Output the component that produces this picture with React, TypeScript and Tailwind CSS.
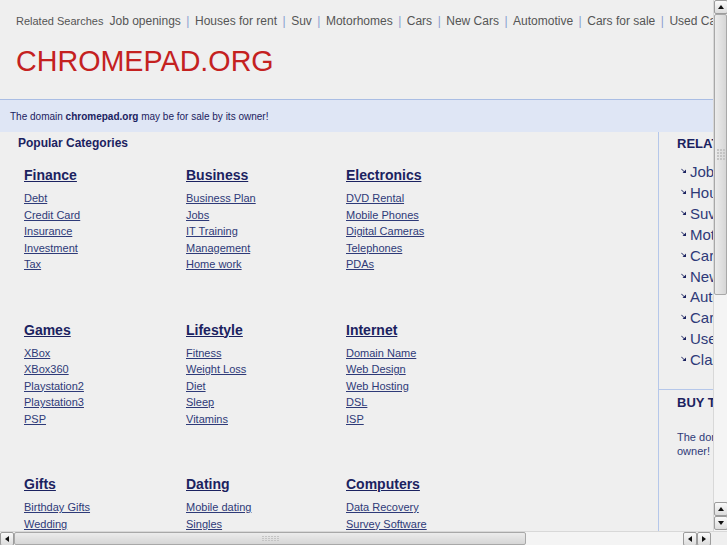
import React from 'react';

const related = [
  'Job openings',
  'Houses for rent',
  'Suv',
  'Motorhomes',
  'Cars',
  'New Cars',
  'Automotive',
  'Cars for sale',
  'Used Cars',
  'Classifieds',
];

const groups = [
  [
    { title: 'Finance', links: ['Debt', 'Credit Card', 'Insurance', 'Investment', 'Tax'] },
    { title: 'Business', links: ['Business Plan', 'Jobs', 'IT Training', 'Management', 'Home work'] },
    { title: 'Electronics', links: ['DVD Rental', 'Mobile Phones', 'Digital Cameras', 'Telephones', 'PDAs'] },
  ],
  [
    { title: 'Games', links: ['XBox', 'XBox360', 'Playstation2', 'Playstation3', 'PSP'] },
    { title: 'Lifestyle', links: ['Fitness', 'Weight Loss', 'Diet', 'Sleep', 'Vitamins'] },
    { title: 'Internet', links: ['Domain Name', 'Web Design', 'Web Hosting', 'DSL', 'ISP'] },
  ],
  [
    { title: 'Gifts', links: ['Birthday Gifts', 'Wedding', 'Flowers', 'Jewelry', 'Toys'] },
    { title: 'Dating', links: ['Mobile dating', 'Singles', 'Online Dating', 'Chat', 'Personals'] },
    { title: 'Computers', links: ['Data Recovery', 'Survey Software', 'Software', 'Laptops', 'Storage'] },
  ],
];

function Arrow({ dir }: { dir: 'up' | 'down' | 'left' | 'right' }) {
  const pts = {
    up: '1,6 4,2 7,6',
    down: '1,2 4,6 7,2',
    left: '6,1 2,4 6,7',
    right: '2,1 6,4 2,7',
  }[dir];
  return (
    <svg width="8" height="8" viewBox="0 0 8 8">
      <polygon points={pts} fill="#111" />
    </svg>
  );
}

function ScrollButton({ dir }: { dir: 'up' | 'down' | 'left' | 'right' }) {
  return (
    <div className="w-[14px] h-[14px] flex items-center justify-center rounded-[2px] border border-[#9c9c9c] bg-gradient-to-b from-[#fafafa] to-[#dcdcdc] shrink-0">
      <Arrow dir={dir} />
    </div>
  );
}

function SideArrow() {
  return (
    <svg width="5" height="5" viewBox="0 0 5 5" className="mt-[6px] shrink-0">
      <line x1="0.3" y1="0.8" x2="3.5" y2="4" stroke="#1b2260" strokeWidth="1" />
      <polygon points="5,1.5 5,5 1.5,5" fill="#1b2260" />
    </svg>
  );
}

export default function App() {
  return (
    <div
      className="w-[727px] h-[545px] flex flex-col overflow-hidden bg-[#efefef]"
      style={{ fontFamily: '"Liberation Sans", Arial, sans-serif' }}
    >
      <div className="flex flex-1 min-h-0">
        <div className="flex-1 overflow-hidden">
          <div className="w-[920px]">
            {/* header */}
            <div className="px-4 pt-[12px] h-[99px]">
              <div className="flex items-baseline whitespace-nowrap text-[12px] text-[#555] leading-[18px]">
                <span className="text-[11px] mr-[6px]">Related Searches</span>
                {related.map((r, i) => (
                  <span key={r} className="flex items-baseline">
                    {i > 0 && <span className="text-[#8a9fd0] mx-[5.5px]">|</span>}
                    <span>{r}</span>
                  </span>
                ))}
              </div>
              <div className="mt-[14px] text-[28.7px] leading-[34px] text-[#c4211f]">
                CHROMEPAD.ORG
              </div>
            </div>

            {/* for sale bar */}
            <div className="h-[33px] border-t border-[#a9bde4] bg-[#dfe6f5] pl-[10px] flex items-center text-[10px] text-[#1b2260]">
              <span>
                The domain <b>chromepad.org</b> may be for sale by its owner!
              </span>
            </div>

            <div className="flex">
              {/* categories */}
              <div className="w-[659px] h-[400px] border-r border-[#b5c7ea] pt-[4px]">
                <div className="pl-[18px] text-[12px] font-bold text-[#1b2260] leading-[15px]">
                  Popular Categories
                </div>
                <div className="pl-[24px] pt-[16px] flex flex-col gap-[49px]">
                  {groups.map((row, ri) => (
                    <div key={ri} className="grid grid-cols-[162px_160px_160px]">
                      {row.map((g) => (
                        <div key={g.title}>
                          <div className="text-[14px] font-bold text-[#1b2260] underline leading-[16px] mb-[7px]">
                            {g.title}
                          </div>
                          <ul className="text-[11px] text-[#2e3a78] leading-[16.5px]">
                            {g.links.map((l) => (
                              <li key={l}>
                                <span className="underline">{l}</span>
                              </li>
                            ))}
                          </ul>
                        </div>
                      ))}
                    </div>
                  ))}
                </div>
              </div>

              {/* sidebar */}
              <div className="w-[250px]">
                <div className="pl-[18px] pr-3 pt-[4px] h-[257px]">
                  <div className="text-[13px] font-bold text-[#1b2260] leading-[15px]">RELATED SEARCHES</div>
                  <ul className="mt-[11px] pl-[4px] text-[15px] text-[#2e3a78] leading-[20.9px]">
                    {related.map((r) => (
                      <li key={r} className="flex items-start gap-[4px]">
                        <SideArrow />
                        <span>{r}</span>
                      </li>
                    ))}
                  </ul>
                </div>
                <div className="border-t border-[#b5c7ea] pl-[18px] pt-[5px]">
                  <div className="text-[13px] font-bold text-[#1b2260] leading-[15px]">BUY THIS DOMAIN</div>
                  <p className="mt-[20px] text-[11px] text-[#2e3a78] leading-[14px] whitespace-nowrap">
                    The domain chromepad.org may be for sale by its
                    <br />
                    owner!
                  </p>
                </div>
              </div>
            </div>
          </div>
        </div>

        {/* vertical scrollbar */}
        <div className="w-[14px] flex flex-col bg-[#f4f4f4] border-l border-[#d8d8d8]">
          <ScrollButton dir="up" />
          <div className="h-[281px] rounded-[2px] border border-[#a8a8a8] bg-gradient-to-r from-[#ececec] to-[#d6d6d6] flex items-center justify-center">
            <div className="grid grid-cols-3 gap-[1px]">
              {Array.from({ length: 12 }).map((_, i) => (
                <span key={i} className="w-[2px] h-[2px] bg-[#c4c4c4]" />
              ))}
            </div>
          </div>
          <div className="flex-1" />
          <ScrollButton dir="up" />
          <ScrollButton dir="down" />
          <div className="h-[1px]" />
        </div>
      </div>

      {/* horizontal scrollbar */}
      <div className="h-[14px] flex bg-[#f4f4f4] border-t border-[#d8d8d8]">
        <ScrollButton dir="left" />
        <div className="w-[512px] rounded-[2px] border border-[#a8a8a8] bg-gradient-to-b from-[#ececec] to-[#d6d6d6] flex items-center justify-center">
          <div className="grid grid-cols-6 gap-[1px]">
            {Array.from({ length: 18 }).map((_, i) => (
              <span key={i} className="w-[2px] h-[1px] bg-[#c4c4c4]" />
            ))}
          </div>
        </div>
        <div className="flex-1" />
        <ScrollButton dir="left" />
        <ScrollButton dir="right" />
        <div className="w-[16px] bg-[#efefef]" />
      </div>
    </div>
  );
}
